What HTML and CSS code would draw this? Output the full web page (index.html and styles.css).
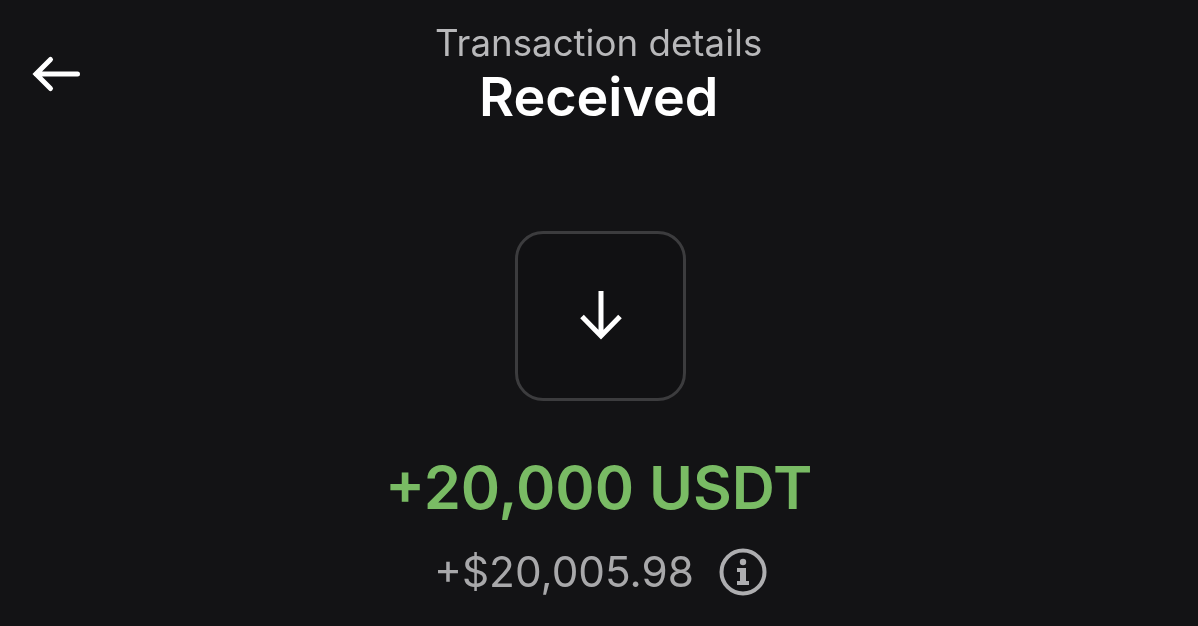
FILE: index.html
```html
<!DOCTYPE html>
<html lang="en">
<head>
<meta charset="utf-8">
<title>Transaction details</title>
<link rel="stylesheet" href="styles.css">
</head>
<body>
<main class="screen">
  <header class="top-bar">
    <button class="back" type="button" aria-label="Back">
      <svg width="50" height="40" viewBox="0 0 50 40" fill="none" stroke="#fff" stroke-width="5" stroke-linecap="round" stroke-linejoin="miter"><path d="M5 19H46.500M19.500 4.500 L5 19 L19.500 33.500"/></svg>
    </button>
    <p class="caption">Transaction details</p>
    <h1 class="status">Received</h1>
  </header>
  <div class="direction-tile">
    <svg class="direction-arrow" width="44" height="52" viewBox="0 0 44 52" fill="none" stroke="#fff" stroke-width="5"><path d="M22 1V46M3 26.500 L22 46 L41 26.500"/></svg>
  </div>
  <p class="amount">+20,000 USDT</p>
  <div class="fiat-row">
    <span class="fiat">+$20,005.98</span>
    <svg class="info" width="48" height="48" viewBox="0 0 48 48"><circle cx="24" cy="24" r="21.500" fill="none" stroke="#aeaeb0" stroke-width="4"/><circle cx="24" cy="14" r="3.200" fill="#aeaeb0"/><path d="M18 20h9v13h3v4H18v-4h3v-9h-3z" fill="#aeaeb0"/></svg>
  </div>
</main>
</body>
</html>
```
FILE: styles.css
```css
* { box-sizing: border-box; }
html, body { margin: 0; height: 100%; }
body { background: #131315; font-family: Inter, "Liberation Sans", sans-serif; overflow: hidden; }
p, h1 { margin: 0; }
.screen { display: flex; flex-direction: column; align-items: center; height: 626px; padding-top: 22px; }
.top-bar { position: relative; align-self: stretch; display: flex; flex-direction: column; align-items: center; }
.back { position: absolute; left: 31px; top: 33px; padding: 0; border: 0; background: none; display: flex; }
.caption, .status, .amount, .fiat { will-change: transform; }
.caption { font-size: 36.700px; line-height: 41px; color: #b8b8ba; }
.status { font-size: 53.800px; line-height: 60px; font-weight: 600; color: #fff; margin-top: 4px; }
.direction-tile { width: 171px; height: 170px; margin: 104px 0 0 2px; display: flex; align-items: center; justify-content: center; background: #111113; border: 3px solid #3c3c3e; border-radius: 28px; }
.direction-arrow { margin-left: 1px; }
.amount { margin-top: 51px; font-size: 59.700px; line-height: 70px; font-weight: 600; color: #79bb64; }
.fiat-row { display: flex; align-items: center; gap: 26px; margin: 26px 0 0 3px; }
.fiat { font-size: 42.300px; line-height: 48px; color: #a8a8aa; }
```
